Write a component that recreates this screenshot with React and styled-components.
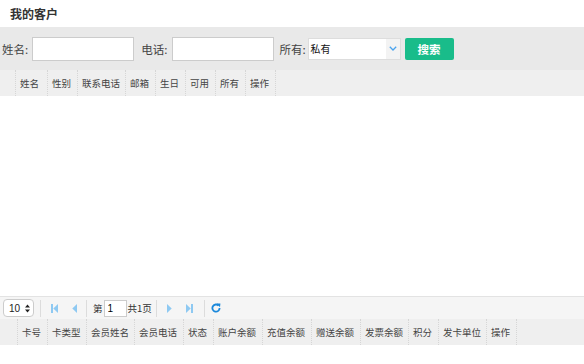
import styled, { createGlobalStyle } from "styled-components";

const GlobalStyle = createGlobalStyle`
  html, body {
    margin: 0;
    padding: 0;
    background: #fff;
  }
  body {
    font-family: "Liberation Serif", "Noto Sans CJK SC", serif;
    color: #333;
  }
  * {
    box-sizing: border-box;
  }
`;

const Page = styled.div`
  width: 584px;
  height: 364px;
  display: flex;
  flex-direction: column;
  overflow: hidden;
`;

const Title = styled.h1`
  margin: 0;
  height: 27px;
  padding-left: 10px;
  display: flex;
  align-items: center;
  font-family: "Noto Sans CJK SC", sans-serif;
  font-size: 12px;
  font-weight: 700;
  color: #333;
`;

const SearchBar = styled.div`
  height: 43px;
  background: #e9e9e9;
  display: flex;
  align-items: center;
  padding-left: 2px;
`;

const Label = styled.span`
  font-family: "Noto Sans CJK SC", sans-serif;
  font-size: 11.5px;
  color: #444;
  margin-left: ${({ $gap }) => $gap || 0}px;
  margin-right: ${({ $r }) => $r ?? 4}px;
`;

const TextInput = styled.input`
  width: 102px;
  height: 24px;
  border: 1px solid #ccc;
  background: #fff;
  padding: 0 4px;
  outline: none;
`;

const Select = styled.div`
  width: 93px;
  height: 22px;
  border: 1px solid #ddd;
  background: #fff;
  display: flex;
  align-items: center;
  font-family: "Noto Sans CJK SC", sans-serif;
  font-size: 10px;
  color: #111;
`;

const SelectText = styled.span`
  flex: 1;
  padding-left: 2px;
`;

const SelectArrow = styled.span`
  width: 14px;
  height: 100%;
  background: #f3f3f3;
  display: flex;
  align-items: center;
  justify-content: center;
`;

const SearchButton = styled.button`
  margin-left: 4px;
  width: 49px;
  height: 22px;
  border: none;
  border-radius: 2px;
  background: #19bc8a;
  color: #fff;
  font-family: "Noto Sans CJK SC", sans-serif;
  font-size: 11.5px;
  font-weight: 700;
  padding: 0;
`;

const HeaderRow = styled.div`
  height: ${({ $h }) => $h}px;
  background: #efefef;
  display: flex;
  align-items: stretch;
  flex-shrink: 0;
`;

const HeadCell = styled.div`
  width: ${({ $w }) => $w}px;
  border-right: 1px dotted #d6d6d6;
  display: flex;
  align-items: center;
  padding-left: 4px;
  font-family: "Noto Sans CJK SC", sans-serif;
  font-size: 9.5px;
  color: #444;
  white-space: nowrap;
`;

const Body = styled.div`
  height: ${({ $h }) => $h}px;
  background: #fff;
  flex-shrink: 0;
`;

const Pager = styled.div`
  height: 23px;
  border-top: 1px solid #e3e3e3;
  background: #f5f5f5;
  display: flex;
  align-items: center;
  padding-left: 3px;
  flex-shrink: 0;
`;

const PageSize = styled.div`
  width: 31px;
  height: 18px;
  border: 1px solid #ccc;
  border-radius: 4px;
  background: #fff;
  display: flex;
  align-items: center;
  justify-content: space-between;
  padding: 0 3px 0 5px;
  font-family: "Liberation Sans", sans-serif;
  font-size: 10px;
  color: #222;
`;

const Divider = styled.span`
  width: 1px;
  height: 17px;
  background: #dcdcdc;
  margin: 0 ${({ $r }) => $r ?? 6}px 0 ${({ $l }) => $l ?? 6}px;
`;

const IconBtn = styled.span`
  width: ${({ $w }) => $w ?? 20}px;
  display: flex;
  align-items: center;
  justify-content: center;
`;

const PagerText = styled.span`
  font-family: "Noto Sans CJK SC", sans-serif;
  font-size: 9.5px;
  color: #333;
`;

const PageInput = styled.input`
  width: 23px;
  height: 17px;
  margin: 0 1px;
  border: 1px solid #ccc;
  background: #fff;
  padding: 0 3px;
  font-family: "Liberation Sans", sans-serif;
  font-size: 10px;
  outline: none;
`;

const Rest = styled.div`
  flex: 1;
  background: #fff;
`;

const customerCols = [
  ["", 16],
  ["姓名", 32],
  ["性别", 30],
  ["联系电话", 48],
  ["邮箱", 30],
  ["生日", 30],
  ["可用", 30],
  ["所有", 30],
  ["操作", 30],
];

const cardCols = [
  ["", 18],
  ["卡号", 30],
  ["卡类型", 39],
  ["会员姓名", 48],
  ["会员电话", 49],
  ["状态", 30],
  ["账户余额", 49],
  ["充值余额", 49],
  ["赠送余额", 49],
  ["发票余额", 48],
  ["积分", 30],
  ["发卡单位", 48],
  ["操作", 30],
];

const pale = "#8ec9f2";

const First = () => (
  <svg width="7" height="9" viewBox="0 0 7 9">
    <rect x="0" y="0" width="2" height="9" fill={pale} />
    <path d="M7 0 L2.3 4.5 L7 9 Z" fill={pale} />
  </svg>
);
const Prev = () => (
  <svg width="5" height="9" viewBox="0 0 5 9">
    <path d="M5 0 L0.3 4.5 L5 9 Z" fill={pale} />
  </svg>
);
const Next = () => (
  <svg width="5" height="9" viewBox="0 0 5 9">
    <path d="M0 0 L4.7 4.5 L0 9 Z" fill={pale} />
  </svg>
);
const Last = () => (
  <svg width="7" height="9" viewBox="0 0 7 9">
    <path d="M0 0 L4.7 4.5 L0 9 Z" fill={pale} />
    <rect x="5" y="0" width="2" height="9" fill={pale} />
  </svg>
);
const Reload = () => (
  <svg width="10" height="10" viewBox="0 0 10 10">
    <path
      d="M7.6 2.6 A3.6 3.6 0 1 0 8.6 5"
      fill="none"
      stroke="#1a88db"
      strokeWidth="1.8"
    />
    <path d="M5.6 0.4 L9.4 0.6 L9 4.2 Z" fill="#1a88db" />
  </svg>
);

export default function App() {
  return (
    <Page>
      <GlobalStyle />
      <Title>我的客户</Title>
      <SearchBar>
        <Label>姓名:</Label>
        <TextInput />
        <Label $gap={7} $r={5}>电话:</Label>
        <TextInput />
        <Label $gap={5} $r={2}>所有:</Label>
        <Select>
          <SelectText>私有</SelectText>
          <SelectArrow>
            <svg width="8" height="5" viewBox="0 0 8 5">
              <path d="M0.8 0.8 L4 4 L7.2 0.8" fill="none" stroke="#4aa3ee" strokeWidth="1.3" />
            </svg>
          </SelectArrow>
        </Select>
        <SearchButton>搜索</SearchButton>
      </SearchBar>
      <HeaderRow $h={26}>
        {customerCols.map(([t, w], i) => (
          <HeadCell key={i} $w={w}>
            {t}
          </HeadCell>
        ))}
      </HeaderRow>
      <Body $h={200} />
      <Pager>
        <PageSize>
          <span>10</span>
          <svg width="5" height="9" viewBox="0 0 5 9">
            <path d="M0 3.6 L2.5 0.6 L5 3.6 Z M0 5.4 L2.5 8.4 L5 5.4 Z" fill="#222" />
          </svg>
        </PageSize>
        <Divider $l={6} $r={3} />
        <IconBtn><First /></IconBtn>
        <IconBtn><Prev /></IconBtn>
        <Divider $l={2} $r={6} />
        <PagerText>第</PagerText>
        <PageInput defaultValue="1" />
        <PagerText>共1页</PagerText>
        <Divider $l={4} $r={3} />
        <IconBtn><Next /></IconBtn>
        <IconBtn><Last /></IconBtn>
        <Divider $l={4} $r={4} />
        <IconBtn $w={14}><Reload /></IconBtn>
      </Pager>
      <HeaderRow $h={26}>
        {cardCols.map(([t, w], i) => (
          <HeadCell key={i} $w={w}>
            {t}
          </HeadCell>
        ))}
      </HeaderRow>
      <Rest />
    </Page>
  );
}
